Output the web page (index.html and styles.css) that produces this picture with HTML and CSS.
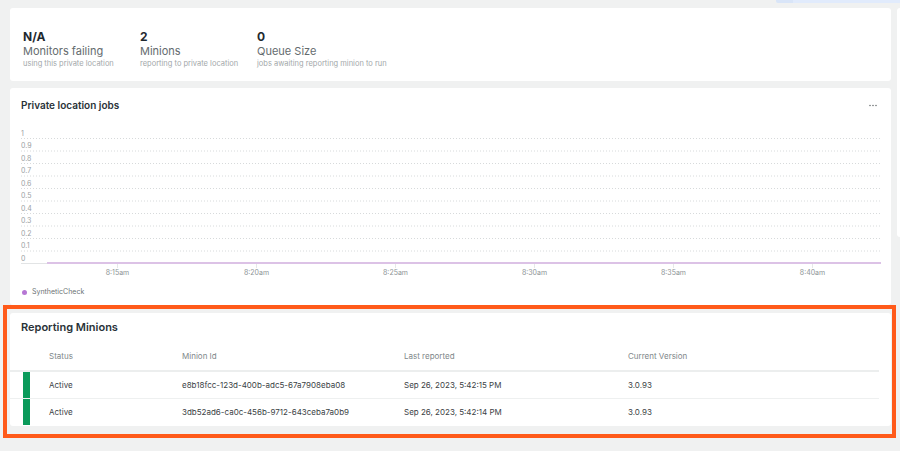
FILE: index.html
```html
<!DOCTYPE html>
<html lang="en">
<head>
<meta charset="utf-8">
<title>Private location</title>
<link rel="stylesheet" href="styles.css">
</head>
<body>
<div class="topbar"><span class="tb-a"></span><span class="tb-b"></span></div>
<div class="layout">
  <div class="main">
    <section class="card stats">
      <div class="stat">
        <div class="stat-value">N/A</div>
        <div class="stat-label">Monitors failing</div>
        <div class="stat-sub">using this private location</div>
      </div>
      <div class="stat">
        <div class="stat-value">2</div>
        <div class="stat-label">Minions</div>
        <div class="stat-sub">reporting to private location</div>
      </div>
      <div class="stat">
        <div class="stat-value">0</div>
        <div class="stat-label">Queue Size</div>
        <div class="stat-sub">jobs awaiting reporting minion to run</div>
      </div>
    </section>

    <section class="card jobs">
      <div class="card-head">
        <h2 class="card-title">Private location jobs</h2>
        <svg class="more" width="8" height="3" viewBox="0 0 8 3"><circle cx="1" cy="1.5" r="0.8"/><circle cx="4" cy="1.5" r="0.8"/><circle cx="7" cy="1.5" r="0.8"/></svg>
      </div>
      <svg class="chart" width="860" height="150" viewBox="0 0 860 150">
        <g class="grid">
          <line x1="0" y1="10.5" x2="860" y2="10.5"/>
          <line x1="0" y1="23" x2="860" y2="23"/>
          <line x1="0" y1="35.5" x2="860" y2="35.5"/>
          <line x1="0" y1="48" x2="860" y2="48"/>
          <line x1="0" y1="60.5" x2="860" y2="60.5"/>
          <line x1="0" y1="73" x2="860" y2="73"/>
          <line x1="0" y1="85.5" x2="860" y2="85.5"/>
          <line x1="0" y1="98" x2="860" y2="98"/>
          <line x1="0" y1="110.5" x2="860" y2="110.5"/>
          <line x1="0" y1="123" x2="860" y2="123"/>
        </g>
        <g class="ylabels">
          <text x="0" y="7.8">1</text>
          <text x="0" y="20.3">0.9</text>
          <text x="0" y="32.8">0.8</text>
          <text x="0" y="45.3">0.7</text>
          <text x="0" y="57.8">0.6</text>
          <text x="0" y="70.3">0.5</text>
          <text x="0" y="82.8">0.4</text>
          <text x="0" y="95.3">0.3</text>
          <text x="0" y="107.8">0.2</text>
          <text x="0" y="120.3">0.1</text>
          <text x="0" y="132.5">0</text>
        </g>
        <line class="axis" x1="0" y1="135.5" x2="26" y2="135.5"/>
        <rect class="series" x="26" y="134" width="834" height="2"/>
        <g class="ticks">
          <line x1="96.5" y1="136" x2="96.5" y2="140"/>
          <line x1="235.5" y1="136" x2="235.5" y2="140"/>
          <line x1="374.5" y1="136" x2="374.5" y2="140"/>
          <line x1="513.5" y1="136" x2="513.5" y2="140"/>
          <line x1="652.5" y1="136" x2="652.5" y2="140"/>
          <line x1="791.5" y1="136" x2="791.5" y2="140"/>
        </g>
        <g class="xlabels">
          <text x="96.5" y="147">8:15am</text>
          <text x="235.5" y="147">8:20am</text>
          <text x="374.5" y="147">8:25am</text>
          <text x="513.5" y="147">8:30am</text>
          <text x="652.5" y="147">8:35am</text>
          <text x="791.5" y="147">8:40am</text>
        </g>
      </svg>
      <div class="legend"><span class="legend-dot"></span><span>SyntheticCheck</span></div>
    </section>

    <section class="card minions">
      <h2 class="card-title big">Reporting Minions</h2>
      <div class="table">
        <div class="tr thead">
          <div></div>
          <div>Status</div>
          <div>Minion Id</div>
          <div>Last reported</div>
          <div>Current Version</div>
        </div>
        <div class="tr row">
          <div class="bar-cell"><span class="bar"></span></div>
          <div>Active</div>
          <div>e8b18fcc-123d-400b-adc5-67a7908eba08</div>
          <div>Sep 26, 2023, 5:42:15 PM</div>
          <div>3.0.93</div>
        </div>
        <div class="tr row last">
          <div class="bar-cell"><span class="bar"></span></div>
          <div>Active</div>
          <div>3db52ad6-ca0c-456b-9712-643ceba7a0b9</div>
          <div>Sep 26, 2023, 5:42:14 PM</div>
          <div>3.0.93</div>
        </div>
      </div>
    </section>
  </div>
  <div class="side"></div>
</div>
<div class="highlight"></div>
</body>
</html>
```

FILE: styles.css
```css
* { box-sizing: border-box; }

html, body {
  margin: 0;
  padding: 0;
}

body {
  width: 900px;
  height: 451px;
  overflow: hidden;
  position: relative;
  background: #f0f1f1;
  font-family: Inter, "Noto Sans", "Liberation Sans", sans-serif;
  color: #293238;
}

.topbar {
  height: 3px;
  display: flex;
  justify-content: flex-end;
}
.tb-a {
  width: 17px;
  background: #d9e5f8;
  border-bottom-left-radius: 2px;
}
.tb-b {
  width: 107px;
  background: #e1ebfc;
}

.layout {
  display: flex;
  gap: 6px;
  padding: 5px 0 0 10px;
}

.main {
  width: 881px;
  display: flex;
  flex-direction: column;
}

.side {
  flex: 1;
  height: 229px;
  background: #ffffff;
  border-radius: 3px 0 0 3px;
}

.card {
  background: #ffffff;
  border-radius: 3px;
}

/* stats card */
.stats {
  height: 73px;
  display: flex;
  padding: 21px 0 0 13px;
}
.stat {
  width: 117px;
  flex: none;
}
.stat-value {
  font-size: 12px;
  line-height: 15px;
  font-weight: 700;
  color: #1f292f;
}
.stat-label {
  font-size: 11px;
  line-height: 15px;
  color: #646b6e;
}
.stat-sub {
  font-size: 7.5px;
  line-height: 10px;
  color: #a3a8aa;
  white-space: nowrap;
}

/* jobs card */
.jobs {
  margin-top: 7px;
  padding: 10px 10px 8px 11px;
}
.card-head {
  display: flex;
  align-items: center;
  justify-content: space-between;
  height: 14px;
}
.card-title {
  margin: 0;
  font-size: 10px;
  line-height: 14px;
  font-weight: 600;
  color: #293238;
}
.more {
  margin-right: 4px;
  fill: #6f7577;
}
.chart {
  display: block;
  margin-top: 16px;
  font-family: Inter, "Noto Sans", "Liberation Sans", sans-serif;
}
.grid line {
  stroke: #d7dadb;
  stroke-width: 1;
  stroke-dasharray: 1 2;
}
.ylabels text {
  font-size: 7px;
  fill: #9ca1a3;
}
.axis {
  stroke: #e2e4e5;
  stroke-width: 1;
}
.series {
  fill: #dcc2e6;
}
.ticks line {
  stroke: #e6e8e9;
  stroke-width: 1;
}
.xlabels text {
  font-size: 7px;
  fill: #8e9496;
  text-anchor: middle;
}
.legend {
  margin-top: 9px;
  display: flex;
  align-items: center;
  gap: 5px;
  font-size: 7px;
  line-height: 10px;
  color: #6c7375;
}
.legend-dot {
  width: 5px;
  height: 5px;
  margin-left: 1px;
  border-radius: 50%;
  background: #b677d4;
}

/* minions card */
.minions {
  margin-top: 8px;
  padding: 7px 0 1px 0;
}
.card-title.big {
  font-size: 11px;
  padding-left: 11px;
}
.table {
  margin-right: 12px;
}
.tr {
  display: grid;
  grid-template-columns: 39px 133px 222px 224px 1fr;
  font-size: 8px;
  line-height: 10px;
}
.thead {
  padding: 17px 0 9px 0;
  border-bottom: 2px solid #eceeee;
  color: #80878a;
}
.row {
  height: 26px;
  align-items: center;
  color: #3b4245;
}
.row:not(.last) {
  height: 27px;
  border-bottom: 1px solid #eef0f0;
}
.bar-cell {
  align-self: stretch;
  display: flex;
}
.bar {
  width: 7px;
  margin-left: 13px;
  background: #0a9a5a;
}

/* annotation overlay */
.highlight {
  position: absolute;
  left: 3px;
  top: 305px;
  width: 893px;
  height: 133px;
  border: 4px solid #ff5a1a;
  pointer-events: none;
}
```
